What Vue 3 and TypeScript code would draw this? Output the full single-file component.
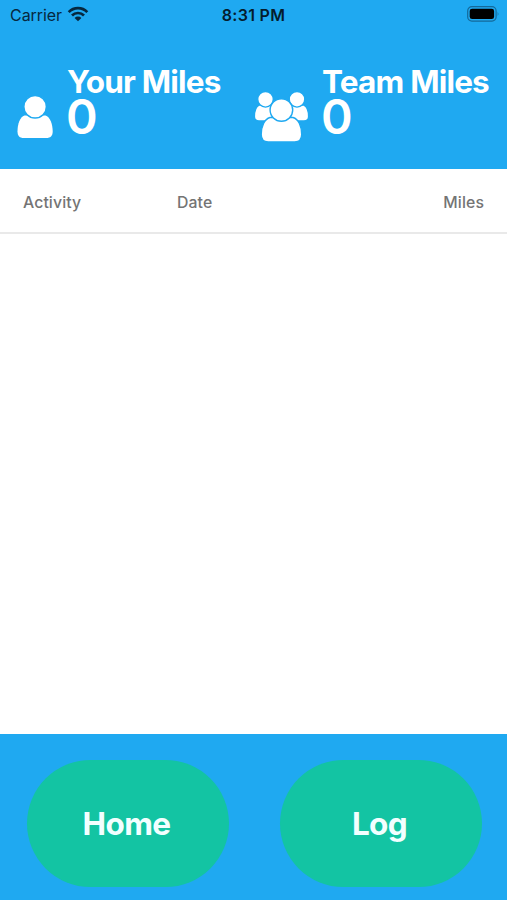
<script setup lang="ts">
interface Stat {
  id: 'user' | 'team'
  label: string
  value: number
}

const stats: Stat[] = [
  { id: 'user', label: 'Your Miles', value: 0 },
  { id: 'team', label: 'Team Miles', value: 0 },
]
const columns: string[] = ['Activity', 'Date', 'Miles']
const actions: string[] = ['Home', 'Log']
</script>

<template>
  <div class="screen">
    <header class="top">
      <div class="status">
        <div class="carrier">
          <span>Carrier</span>
          <svg class="wifi" width="22" height="16" viewBox="0 0 22 16">
            <g fill="none" stroke="#06283f" stroke-width="2.7">
              <path d="M1.7 6.1a13 13 0 0 1 18.6 0" />
              <path d="M5 9.5a8.4 8.4 0 0 1 12 0" />
            </g>
            <path d="M11 15.300 7.600 11.900a4.800 4.800 0 0 1 6.800 0z" fill="#06283f" />
          </svg>
        </div>
        <span class="time">8:31 PM</span>
        <svg class="battery" width="33" height="16" viewBox="0 0 33 16">
          <rect x="0.700" y="0.700" width="28.400" height="14.400" rx="4.200" fill="none" stroke="#14699a" stroke-width="1.200" />
          <rect x="2.700" y="2.700" width="24.400" height="10.400" rx="2.400" fill="#000" />
          <path d="M30.700 5.800q1.500 2.100 0 4.200z" fill="#14699a" />
        </svg>
      </div>
      <div class="stats">
        <section v-for="s in stats" :key="s.id" class="stat" :class="s.id">
          <svg v-if="s.id === 'user'" class="icon" width="36" height="44" viewBox="17 95 36 44">
            <path d="M24.500 115.500h21c4.500 1.500 7.200 8.500 7.200 16 0 4.500-2.500 6.500-6.200 6.500h-23c-3.700 0-6-2-6-6.500 0-7.500 2.500-14.500 7-16z" fill="#fff" />
            <circle cx="35.100" cy="106.700" r="11.300" fill="#fff" stroke="#1fa9f1" stroke-width="1.500" />
          </svg>
          <svg v-else class="icon" width="54" height="51" viewBox="255 91 54 51">
            <g fill="#fff" stroke="#1fa9f1" stroke-width="1.400">
              <path d="M259 105h13.500v16H259c-3 0-4.600-1.600-4.600-4.500 0-5 1.500-10 4.600-11.500z" />
              <path d="M304 105h-13.500v16H304c3 0 4.600-1.600 4.600-4.500 0-5-1.500-10-4.600-11.500z" />
              <circle cx="265.500" cy="99.300" r="7.800" />
              <circle cx="297" cy="99.300" r="7.800" />
              <path d="M270 117.500h23c5.500 1.500 8.700 8.500 8.700 17 0 5-2.500 7.400-7 7.400h-26.500c-4.500 0-7-2.400-7-7.400 0-8.500 3.300-15.500 8.800-17z" />
              <circle cx="281.400" cy="110" r="11.300" />
            </g>
          </svg>
          <div class="figures">
            <h2>{{ s.label }}</h2>
            <strong>{{ s.value }}</strong>
          </div>
        </section>
      </div>
    </header>

    <main class="log">
      <div class="columns">
        <span v-for="c in columns" :key="c">{{ c }}</span>
      </div>
    </main>

    <footer class="actions">
      <button v-for="a in actions" :key="a" type="button">{{ a }}</button>
    </footer>
  </div>
</template>

<style>
body {
  margin: 0;
}
</style>

<style scoped>
.screen {
  display: flex;
  flex-direction: column;
  height: 900px;
  background: #fff;
  font-family: Inter, "Liberation Sans", sans-serif;
}
.top {
  box-sizing: border-box;
  height: 169px;
  background: #1fa9f1;
}
.status {
  display: grid;
  grid-template-columns: 1fr auto 1fr;
  align-items: center;
  height: 30px;
  padding: 0 7px 0 10px;
  box-sizing: border-box;
  font-size: 16px;
  line-height: 30px;
  color: #06283f;
}
.carrier {
  display: flex;
  align-items: center;
  gap: 5px;
  letter-spacing: -0.05px;
}
.wifi {
  margin-top: -2px;
}
.time {
  margin-right: 3px;
  font-weight: 600;
  letter-spacing: 0.3px;
  color: #041c2e;
}
.battery {
  justify-self: end;
  margin-top: -2px;
}
.stats {
  display: flex;
  padding-top: 36px;
}
.stat {
  display: flex;
  align-items: flex-start;
  color: #fff;
}
.user {
  width: 238px;
  padding-left: 17px;
}
.user .icon {
  margin: 29px 14px 0 0;
}
.team .icon {
  margin: 25px 13px 0 0;
}
.figures {
  display: flex;
  flex-direction: column;
}
h2 {
  margin: 0;
  font-size: 31.5px;
  line-height: 31px;
  font-weight: 700;
  letter-spacing: -0.8px;
  white-space: nowrap;
}
strong {
  margin-left: -1px;
  font-size: 48px;
  line-height: 40px;
  font-weight: 600;
}
.log {
  flex: 1;
}
.columns {
  display: grid;
  grid-template-columns: 154px 1fr auto;
  height: 63px;
  padding: 0 23px;
  border-bottom: 2px solid #e9e9e9;
  font-size: 15.8px;
  line-height: 68px;
  font-weight: 500;
  letter-spacing: 0.1px;
  color: #747474;
}
.actions {
  box-sizing: border-box;
  display: flex;
  justify-content: space-between;
  height: 166px;
  padding: 26px 25px 0 27px;
  background: #1fa9f1;
}
button {
  width: 202px;
  height: 127px;
  padding: 0 3px 1px 0;
  border: 0;
  border-radius: 64px;
  background: #13c4a3;
  color: #f2ffff;
  font-family: inherit;
  font-size: 31.5px;
  font-weight: 700;
  letter-spacing: -0.6px;
}
</style>
